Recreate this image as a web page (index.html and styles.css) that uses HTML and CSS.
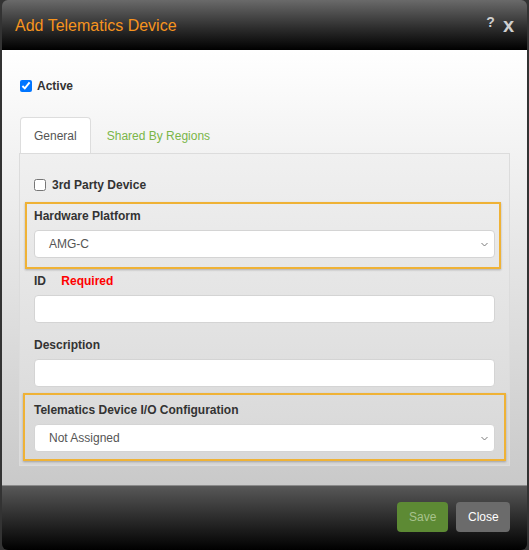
FILE: index.html
```html
<!DOCTYPE html>
<html>
<head>
<meta charset="utf-8">
<link rel="stylesheet" href="styles.css">
</head>
<body>
<div class="dialog">
  <div class="header">
    <div class="title">Add Telematics Device</div>
    <div class="tools">
      <span class="help">?</span>
      <span class="close-x">x</span>
    </div>
  </div>
  <div class="content">
    <label class="check-row active-row">
      <input type="checkbox" checked>
      <span>Active</span>
    </label>
    <div class="tabs">
      <div class="tab selected">General</div>
      <div class="tab">Shared By Regions</div>
    </div>
    <div class="panel">
      <label class="check-row party-row">
        <input type="checkbox">
        <span>3rd Party Device</span>
      </label>
      <div class="group group-hw">
        <div class="label">Hardware Platform</div>
        <div class="select">
          <span>AMG-C</span>
          <svg width="7" height="5" viewBox="0 0 7 5"><path d="M0.5 1 L3.5 4 L6.5 1" fill="none" stroke="#7a7a7a" stroke-width="1"/></svg>
        </div>
      </div>
      <div class="label id-label">ID <span class="req">Required</span></div>
      <div class="input"></div>
      <div class="label desc-label">Description</div>
      <div class="input"></div>
      <div class="group group-io">
        <div class="label">Telematics Device I/O Configuration</div>
        <div class="select">
          <span>Not Assigned</span>
          <svg width="7" height="5" viewBox="0 0 7 5"><path d="M0.5 1 L3.5 4 L6.5 1" fill="none" stroke="#7a7a7a" stroke-width="1"/></svg>
        </div>
      </div>
    </div>
  </div>
  <div class="footer">
    <button class="btn save">Save</button>
    <button class="btn close">Close</button>
  </div>
</div>
</body>
</html>
```
FILE: styles.css
```css
html, body {
  margin: 0;
  padding: 0;
  background: #333;
  font-family: "Liberation Sans", Arial, sans-serif;
}
.dialog {
  margin-left: 2px;
  width: 525px;
  height: 550px;
  display: flex;
  flex-direction: column;
  border-radius: 6px;
  overflow: hidden;
}
.header {
  height: 50px;
  box-sizing: border-box;
  padding: 15px 13px 0 13px;
  display: flex;
  justify-content: space-between;
  align-items: flex-start;
  background: linear-gradient(#6a6a6a, #2e2e2e 55%, #000);
}
.title {
  margin-top: 2px;
  font-size: 16px;
  line-height: 18px;
  color: #f7941e;
}
.tools {
  display: flex;
  align-items: flex-start;
  gap: 8px;
  font-weight: bold;
  color: #cfcfcf;
}
.help {
  margin-top: 1px;
  font-size: 14px;
  line-height: 13px;
}
.close-x {
  font-size: 20px;
  line-height: 20px;
}
.content {
  height: 435px;
  box-sizing: border-box;
  padding: 29px 17px 0 17px;
  background: linear-gradient(#ffffff, #c9c9c9);
}
.check-row {
  display: flex;
  align-items: center;
  gap: 5px;
  font-size: 12px;
  line-height: 14px;
  font-weight: bold;
  color: #333;
}
.check-row input {
  margin: 0;
  width: 12px;
  height: 12px;
}
.active-row {
  margin-left: 1px;
}
.tabs {
  margin-top: 24px;
  margin-left: 1px;
  display: flex;
  height: 36px;
}
.tab {
  box-sizing: border-box;
  height: 36px;
  padding: 12px 14px 0 14px;
  font-size: 12px;
  line-height: 14px;
  color: #7ab648;
}
.tab.selected {
  color: #555;
  background: #fff;
  border: 1px solid #ddd;
  border-bottom: none;
  border-radius: 4px 4px 0 0;
  padding: 11px 13px 0 13px;
  margin-right: 2px;
}
.panel {
  height: 313px;
  box-sizing: border-box;
  border: 1px solid #dcdcdc;
  background: linear-gradient(#f0f0f0, #d7d7d7);
  padding: 24px 14px 0 14px;
}
.party-row {
  margin-left: 0;
  gap: 6px;
}
.label {
  font-size: 12px;
  line-height: 14px;
  font-weight: bold;
  color: #333;
  margin-bottom: 7px;
}
.req {
  color: #f00;
  margin-left: 12px;
}
.group {
  border: 2px solid #efb236;
  box-shadow: 0 1px 2px rgba(0, 0, 0, 0.25);
}
.group-hw {
  margin: 10px -6px 0 -9px;
  padding: 5px 4px 9px 7px;
}
.group-io {
  margin: 6px -11px 0 -11px;
  padding: 8px 9px 7px 9px;
}
.select, .input {
  height: 28px;
  box-sizing: border-box;
  background: #fff;
  border: 1px solid #d4d4d4;
  border-radius: 4px;
}
.select {
  display: flex;
  justify-content: space-between;
  align-items: center;
  padding: 0 6px 0 14px;
  font-size: 12px;
  color: #555;
}
.select svg {
  display: block;
}
.id-label {
  margin-top: 5px;
}
.desc-label {
  margin-top: 15px;
}
.footer {
  flex: 1;
  border-top: 1px solid #8a8a8a;
  background: linear-gradient(#585858, #000);
  display: flex;
  justify-content: flex-end;
  align-items: flex-start;
  padding: 16px 17px 0 0;
  gap: 8px;
}
.btn {
  height: 30px;
  padding: 0 12px;
  border: none;
  border-radius: 4px;
  font-family: "Liberation Sans", Arial, sans-serif;
  font-size: 12px;
}
.save {
  background: #5d8a34;
  color: #a8c28c;
  width: 51px;
}
.close {
  background: #6b6b6b;
  color: #fff;
  width: 54px;
}
```
